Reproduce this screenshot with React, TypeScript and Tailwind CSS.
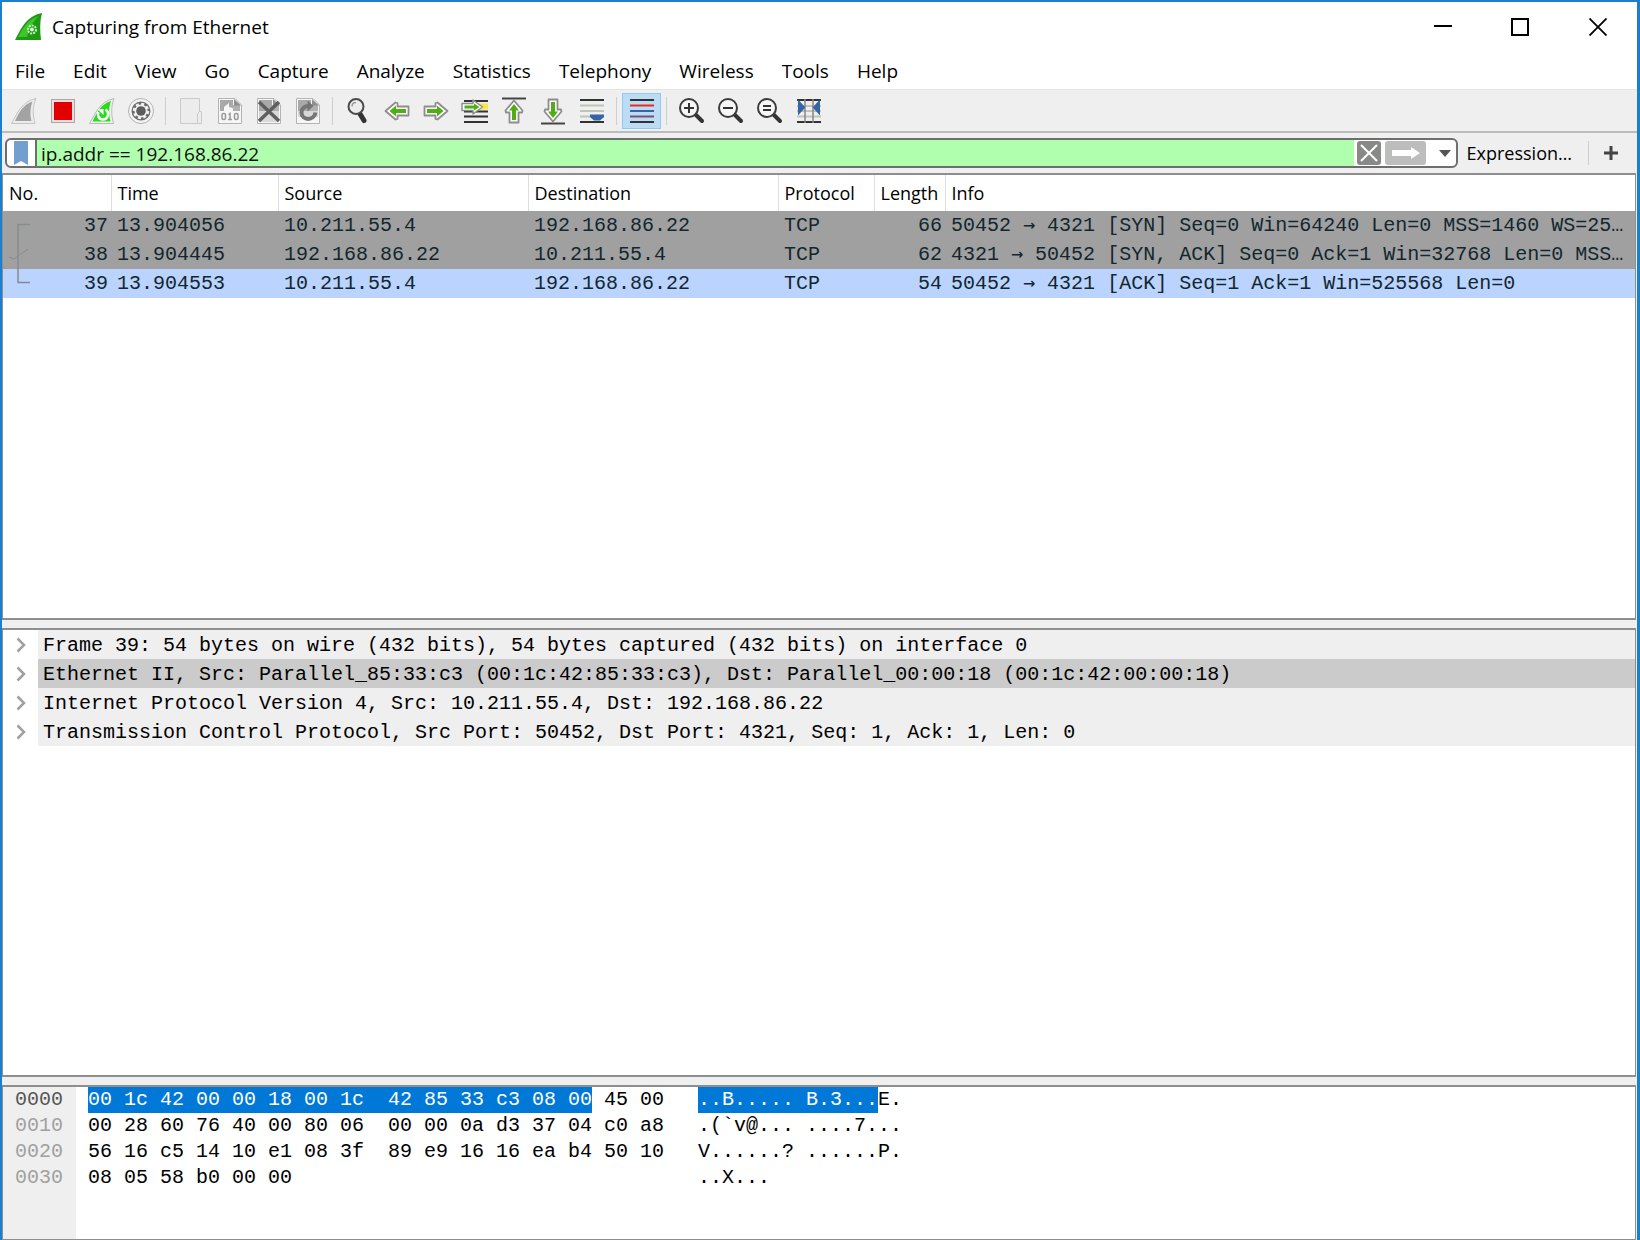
import type { ReactNode } from 'react'

const menus = ['File', 'Edit', 'View', 'Go', 'Capture', 'Analyze', 'Statistics', 'Telephony', 'Wireless', 'Tools', 'Help']

const packets = [
  { no: 37, time: '13.904056', src: '10.211.55.4', dst: '192.168.86.22', proto: 'TCP', len: 66, from: '50452', to: '4321', info: '[SYN] Seq=0 Win=64240 Len=0 MSS=1460 WS=25…', row: 'bg-[#a0a0a0]' },
  { no: 38, time: '13.904445', src: '192.168.86.22', dst: '10.211.55.4', proto: 'TCP', len: 62, from: '4321', to: '50452', info: '[SYN, ACK] Seq=0 Ack=1 Win=32768 Len=0 MSS…', row: 'bg-[#a0a0a0]' },
  { no: 39, time: '13.904553', src: '10.211.55.4', dst: '192.168.86.22', proto: 'TCP', len: 54, from: '50452', to: '4321', info: '[ACK] Seq=1 Ack=1 Win=525568 Len=0', row: 'bg-[#bad3ff]' },
]

const columns = [
  { label: 'No.', width: 'w-[108px]' },
  { label: 'Time', width: 'w-[167px]' },
  { label: 'Source', width: 'w-[250px]' },
  { label: 'Destination', width: 'w-[250px]' },
  { label: 'Protocol', width: 'w-[96px]' },
  { label: 'Length', width: 'w-[71px]' },
  { label: 'Info', width: '' },
]

const details = [
  'Frame 39: 54 bytes on wire (432 bits), 54 bytes captured (432 bits) on interface 0',
  'Ethernet II, Src: Parallel_85:33:c3 (00:1c:42:85:33:c3), Dst: Parallel_00:00:18 (00:1c:42:00:00:18)',
  'Internet Protocol Version 4, Src: 10.211.55.4, Dst: 192.168.86.22',
  'Transmission Control Protocol, Src Port: 50452, Dst Port: 4321, Seq: 1, Ack: 1, Len: 0',
]

const dump = [
  { offset: '0000', hexSel: '00 1c 42 00 00 18 00 1c  42 85 33 c3 08 00', hex: ' 45 00', asciiSel: '..B..... B.3...', ascii: 'E.' },
  { offset: '0010', hexSel: '', hex: '00 28 60 76 40 00 80 06  00 00 0a d3 37 04 c0 a8', asciiSel: '', ascii: '.(`v@... ....7...' },
  { offset: '0020', hexSel: '', hex: '56 16 c5 14 10 e1 08 3f  89 e9 16 16 ea b4 50 10', asciiSel: '', ascii: 'V......? ......P.' },
  { offset: '0030', hexSel: '', hex: '08 05 58 b0 00 00', asciiSel: '', ascii: '..X...' },
]

function Icon({ children }: { children: ReactNode }) {
  return (
    <svg viewBox="0 0 28 28" className="size-7" fill="none" aria-hidden="true">
      {children}
    </svg>
  )
}

function Tool({ label, active, children }: { label: string; active?: boolean; children: ReactNode }) {
  return (
    <button
      type="button"
      aria-label={label}
      className={
        active
          ? 'flex h-9 w-[39px] items-center justify-center border border-[#90c8f6] bg-[#bcdcf4]'
          : 'flex h-9 w-[39px] items-center justify-center border border-transparent'
      }
    >
      <Icon>{children}</Icon>
    </button>
  )
}

function Sep() {
  return <div className="mx-[5px] h-7 w-px bg-[#cfcfcf]" />
}

// Page with a folded corner, shared by the save, close and reload icons
function Page() {
  return (
    <>
      <path d="M2.500 1.500H19L25.500 8V26.500H2.500Z" fill="#f6f6f6" stroke="#b4b4b4" />
      <path d="M4 3H17V14H4Z" fill="#a8a8a8" />
      <path d="M17 8H24V14H17Z" fill="#b0b0b0" />
      <path d="M18 2V8.500H25Z" fill="#8f8f8f" />
    </>
  )
}

function Lens({ sign }: { sign: string }) {
  return (
    <>
      <path d="M17 17L24 24" stroke="#333" strokeWidth="4" strokeLinecap="round" />
      <circle cx="11" cy="11" r="9" fill="#f6f6f6" stroke="#3c3c3c" strokeWidth="2" />
      <path d={sign} stroke="#333" strokeWidth="2" />
    </>
  )
}

function Arrow() {
  return (
    <>
      <path d="M2.500 9.500H13.500V6L15.500 5.500L25.500 14L15.500 22.500L13.500 22V18.500H2.500Z" fill="#fff" stroke="#8d8d8d" strokeWidth="1.800" strokeLinejoin="round" />
      <path d="M5 12H15V8.500L21.500 14L15 19.500V16H5Z" fill="#4fae14" />
    </>
  )
}

function Toolbar() {
  return (
    <div role="toolbar" aria-label="Main toolbar" className="flex h-[43px] items-center border-b-2 border-[#bcbcbc] bg-[#efefef] pl-[2px]">
      <Tool label="Start capture">
        <path d="M1.500 26.500C7 17 12 4 26 1.500C22.500 9 22.500 18 25 26.500Z" fill="#ececec" stroke="#c4c4c4" />
        <path d="M5 24C9 15 14 7 22.500 4.500C20 11 20 18 21.500 24Z" fill="#a3a3a3" />
      </Tool>
      <Tool label="Stop capture">
        <rect x="2.500" y="2.500" width="23" height="23" fill="#f0dede" stroke="#a8a8a8" />
        <rect x="5" y="5" width="18" height="18" fill="#e00000" />
      </Tool>
      <Tool label="Restart capture">
        <path d="M1.500 26.500C7 17 12 4 26 1.500C23 9 23 18 25.500 26.500Z" fill="#f3f3f3" stroke="#b9b9b9" />
        <path d="M4.500 24.500C9 15 13 7 23 4C20.500 11 21 18 22.500 24.500Z" fill="#27dc1c" />
        <path d="M17.500 12.500C22 15.500 20 22.500 15 22.500C10.500 22.500 9 18 10.500 15" stroke="#fff" strokeWidth="2.500" />
        <path d="M10 12.500L15.500 12V18Z" fill="#fff" />
      </Tool>
      <Tool label="Capture options">
        <circle cx="14" cy="14" r="12.500" fill="#f3f3f3" stroke="#b3b3b3" />
        <circle cx="14" cy="14" r="8" stroke="#6b6b6b" strokeWidth="3" />
        <circle cx="14" cy="14" r="7" stroke="#f3f3f3" strokeWidth="2.500" strokeDasharray="3 2.500" />
        <circle cx="14" cy="14" r="4.800" fill="#5e5e5e" />
      </Tool>
      <Sep />
      <Tool label="Open">
        <path d="M3.500 1.500H22.500V14.500H24.500V26.500H3.500Z" fill="#ececec" stroke="#cacaca" />
        <path d="M20.500 26V16.500L22.500 14.500" stroke="#cacaca" />
      </Tool>
      <Tool label="Save">
        <Page />
        <path d="M8 14V10L13 6V10L17 11V14Z" fill="#f6f6f6" />
        <rect x="6" y="16.500" width="3.500" height="6" rx="1.500" stroke="#999" strokeWidth="1.500" />
        <path d="M12.500 17.500L14 16.500V22.500M12 22.500H16" stroke="#999" strokeWidth="1.500" />
        <rect x="18.500" y="16.500" width="3.500" height="6" rx="1.500" stroke="#999" strokeWidth="1.500" />
      </Tool>
      <Tool label="Close">
        <Page />
        <path d="M4 14H24V25H4Z" fill="#d8d8d8" />
        <path d="M4 5L24 24M24 5L4 24" stroke="#5f5f5f" strokeWidth="3.500" />
      </Tool>
      <Tool label="Reload">
        <Page />
        <path d="M4 14H24V20H4Z" fill="#d8d8d8" />
        <path d="M21.500 15.500C20.500 24 7.500 24 7.500 15.500C7.500 11.500 10.500 9 15 9" stroke="#757575" strokeWidth="4" />
        <path d="M13.500 3.500L19.500 9L13.500 14.500Z" fill="#757575" />
      </Tool>
      <Sep />
      <Tool label="Find">
        <path d="M15.500 16L20 23.500" stroke="#333" strokeWidth="5" strokeLinecap="round" />
        <circle cx="12" cy="9.500" r="7.500" fill="#ededed" stroke="#4a4a4a" strokeWidth="2" />
        <path d="M8 9.500C8 7 9.500 5.500 12 5.500" stroke="#999" strokeWidth="1.500" />
      </Tool>
      <Tool label="Go back">
        <g transform="rotate(180 14 14)">
          <Arrow />
        </g>
      </Tool>
      <Tool label="Go forward">
        <Arrow />
      </Tool>
      <Tool label="Go to packet">
        <path d="M3 4H27M3 19.500H27M3 25H27" stroke="#333" strokeWidth="2" />
        <path d="M16 9.500H27" stroke="#f4e84a" strokeWidth="6" />
        <path d="M3 14.500H27" stroke="#333" strokeWidth="2" />
        <path d="M1 6.500H12V3L21.500 10L12 17V13.500H1Z" fill="#fff" stroke="#8d8d8d" strokeWidth="1.500" strokeLinejoin="round" />
        <path d="M3.500 8.500H13V6.500L18.500 10L13 13.500V11.500H3.500Z" fill="#4fae14" />
      </Tool>
      <Tool label="First packet">
        <path d="M2 1.500H26" stroke="#444" strokeWidth="2" />
        <path d="M9.500 25.500V15.500H6L5.500 13.500L14 3.500L22.500 13.500L22 15.500H18.500V25.500Z" fill="#fff" stroke="#8d8d8d" strokeWidth="1.800" strokeLinejoin="round" />
        <path d="M12 23V13.500H9L14 7L19 13.500H16V23Z" fill="#4fae14" />
      </Tool>
      <Tool label="Last packet">
        <path d="M2 26.500H26" stroke="#444" strokeWidth="2" />
        <path d="M9.500 2.500V12.500H6L5.500 14.500L14 24.500L22.500 14.500L22 12.500H18.500V2.500Z" fill="#fff" stroke="#8d8d8d" strokeWidth="1.800" strokeLinejoin="round" />
        <path d="M12 5V14.500H9L14 21L19 14.500H16V5Z" fill="#4fae14" />
      </Tool>
      <Tool label="Auto scroll">
        <path d="M2 3H26M2 25H26" stroke="#333" strokeWidth="2" />
        <path d="M2 8.500H26M2 14H26M2 19.500H26" stroke="#bfc4ba" strokeWidth="2" />
        <path d="M12 17.500H26V20L22 23.500H16L12 20Z" fill="#3465a4" />
      </Tool>
      <Sep />
      <Tool label="Colorize packets" active>
        <path d="M2 3H26M2 25H26" stroke="#333" strokeWidth="2" />
        <path d="M2 8.500H26" stroke="#ef2929" strokeWidth="2" />
        <path d="M2 14H26" stroke="#3465a4" strokeWidth="2" />
        <path d="M2 19.500H26" stroke="#75507b" strokeWidth="2" />
      </Tool>
      <Sep />
      <Tool label="Zoom in">
        <Lens sign="M6 11H16M11 6V16" />
      </Tool>
      <Tool label="Zoom out">
        <Lens sign="M6 11H16" />
      </Tool>
      <Tool label="Normal size">
        <Lens sign="M7 9H15M7 13H15" />
      </Tool>
      <Tool label="Resize columns">
        <path d="M2 3H26M2 25H26" stroke="#333" strokeWidth="2" />
        <path d="M2 9H26M2 14H26M2 19.500H26" stroke="#c0c4bb" strokeWidth="2" />
        <path d="M10 2V26M18 2V26" stroke="#888" strokeWidth="1.500" />
        <path d="M4 5L9 10.500L4 16ZM24 5L19 10.500L24 16Z" fill="#3465a4" stroke="#3465a4" strokeWidth="2" />
      </Tool>
    </div>
  )
}

function FilterBar() {
  return (
    <div className="flex h-[40px] items-center bg-[#efefef] pr-[19px] pl-[3px]">
      <div className="flex h-[30px] flex-1 items-stretch overflow-hidden rounded-md border-2 border-[#6e6e6e] bg-white">
        <button type="button" aria-label="Filter bookmarks" className="flex w-[30px] items-center justify-center border-r-2 border-[#6e6e6e]">
          <svg viewBox="0 0 14 24" className="h-6 w-[14px]" aria-hidden="true">
            <path d="M0 0H14V24L7 20L0 24Z" fill="#729fcf" />
          </svg>
        </button>
        <input
          aria-label="Display filter"
          defaultValue="ip.addr == 192.168.86.22"
          className="min-w-0 flex-1 bg-[#afffaf] pt-[2px] pl-1 text-[19px] text-[#101010] outline-none"
        />
        <button type="button" aria-label="Clear filter" className="mx-[3px] flex w-6 items-center justify-center">
          <svg viewBox="0 0 24 24" className="size-6" aria-hidden="true">
            <rect width="24" height="24" rx="3" fill="#888a85" />
            <path d="M4 4L20 20M20 4L4 20" stroke="#fff" strokeWidth="2" />
          </svg>
        </button>
        <button type="button" aria-label="Apply filter" className="mr-[7px] flex w-[43px] items-center justify-center">
          <svg viewBox="0 0 41 24" className="h-6 w-[41px]" aria-hidden="true">
            <rect width="41" height="24" rx="3" fill="#bdbdbd" />
            <path d="M7 9H26V6L35 12L26 18V15H7Z" fill="#fff" />
          </svg>
        </button>
        <button type="button" aria-label="Recent filters" className="flex w-[22px] items-center justify-center">
          <svg viewBox="0 0 12 7" className="h-[7px] w-3" aria-hidden="true">
            <path d="M0 0H12L6 7Z" fill="#555" />
          </svg>
        </button>
      </div>
      <button type="button" className="ml-[9px] text-[18px]">Expression…</button>
      <div className="ml-[16px] h-6 w-px bg-[#cfcfcf]" />
      <button type="button" aria-label="Add filter button" className="ml-[15px]">
        <svg viewBox="0 0 14 14" className="size-[14px]" aria-hidden="true">
          <path d="M7 0V14M0 7H14" stroke="#444" strokeWidth="3" />
        </svg>
      </button>
    </div>
  )
}

function PacketList() {
  return (
    <div className="relative h-[447px] border-x border-y-2 border-[#8e8e8e] bg-white">
      <table className="w-full table-fixed border-collapse text-left">
        <colgroup>
          {columns.map((c) => (
            <col key={c.label} className={c.width} />
          ))}
        </colgroup>
        <thead>
          <tr className="h-9 text-[18px]">
            {columns.map((c) => (
              <th key={c.label} scope="col" className="border-r border-[#dedede] p-0 pl-[6px] font-normal last:border-r-0">
                {c.label}
              </th>
            ))}
          </tr>
        </thead>
        <tbody className="font-['Liberation_Mono',monospace] text-[20px] leading-[29px] text-[#12272e]">
          {packets.map((p) => (
            <tr key={p.no} className={p.row}>
              <td className="p-0 pr-[3px] text-right">{p.no}</td>
              <td className="p-0 pl-[6px]">{p.time}</td>
              <td className="p-0 pl-[6px]">{p.src}</td>
              <td className="p-0 pl-[6px]">{p.dst}</td>
              <td className="p-0 pl-[6px]">{p.proto}</td>
              <td className="p-0 pr-[3px] text-right">{p.len}</td>
              <td className="p-0 pl-[6px] whitespace-nowrap">
                {p.from} <span className="font-['DejaVu_Sans_Mono',monospace] leading-none">→</span> {p.to} {p.info}
              </td>
            </tr>
          ))}
        </tbody>
      </table>
      {/* conversation bracket over the No. column */}
      <svg viewBox="0 0 24 62" className="absolute top-[48px] left-[5px] h-[62px] w-6" fill="none" aria-hidden="true">
        <path d="M22 1.500H10V59.500H22" stroke="#858a90" strokeWidth="1.500" />
        <path d="M1 34L6 36L20 26" stroke="#8c8c8c" strokeWidth="1" />
      </svg>
    </div>
  )
}

function PacketDetails() {
  return (
    <ul className="h-[449px] border-x border-y-2 border-[#8e8e8e] bg-white font-['Liberation_Mono',monospace] text-[20px] leading-[27px]">
      {details.map((d, i) => (
        <li key={d} className="flex">
          <button type="button" aria-label="Expand" className="flex w-[35px] items-center justify-center">
            <svg viewBox="0 0 10 16" className="h-4 w-[10px]" fill="none" aria-hidden="true">
              <path d="M1.500 1.500L8 8L1.500 14.500" stroke="#a0a0a0" strokeWidth="2.500" />
            </svg>
          </button>
          <span className={i === 1 ? 'flex-1 bg-[#cbcbcb] pt-[2px] pl-[5px]' : 'flex-1 bg-[#efefef] pt-[2px] pl-[5px]'}>{d}</span>
        </li>
      ))}
    </ul>
  )
}

function PacketBytes() {
  return (
    <div className="flex flex-1 flex-col border border-t-2 border-[#8e8e8e] bg-white font-['Liberation_Mono',monospace] text-[20px] leading-[26px]">
      {dump.map((line, i) => (
        <div key={line.offset} className="flex whitespace-pre">
          <span className={i === 0 ? 'w-[73px] bg-[#efefef] pl-[12px] text-[#555]' : 'w-[73px] bg-[#efefef] pl-[12px] text-[#a0a0a0]'}>
            {line.offset}
          </span>
          <span className="ml-[12px] w-[610px]">
            <span className="inline-block bg-[#0078d7] text-white">{line.hexSel}</span>
            {line.hex}
          </span>
          <span>
            <span className="inline-block bg-[#0078d7] text-white">{line.asciiSel}</span>
            {line.ascii}
          </span>
        </div>
      ))}
      <div className="w-[73px] flex-1 bg-[#efefef]" />
    </div>
  )
}

export default function App() {
  return (
    <div className="flex min-h-screen flex-col border-t-2 border-r-3 border-l-2 border-[#1b7fd0] bg-[#efefef] font-['Open_Sans','Noto_Sans',sans-serif] text-black">
      <header className="flex h-[50px] items-center bg-white pl-[13px]">
        <svg viewBox="0 0 28 28" className="size-7" aria-hidden="true">
          <path d="M0 27C6 16 11 3 27 0C24.500 9 25 18 26 27Z" fill="#1d9a12" />
          <path d="M3 24C8 15 13 6 24 3C20 6 15 13 12 24Z" fill="#3fc52c" />
          <circle cx="17" cy="16.500" r="4" fill="none" stroke="#c9efc4" strokeWidth="2" strokeDasharray="2 1" />
          <circle cx="17" cy="16.500" r="2" fill="#d9f5d5" />
        </svg>
        <h1 className="ml-[9px] flex-1 text-[19px]">Capturing from Ethernet</h1>
        <button type="button" aria-label="Minimize" className="flex h-full w-[78px] items-center justify-center">
          <svg viewBox="0 0 18 18" className="size-[18px]" aria-hidden="true">
            <path d="M0 8H18" stroke="#000" strokeWidth="2" />
          </svg>
        </button>
        <button type="button" aria-label="Maximize" className="flex h-full w-[76px] items-center justify-center">
          <svg viewBox="0 0 18 18" className="size-[18px]" fill="none" aria-hidden="true">
            <rect x="1" y="1" width="16" height="16" stroke="#000" strokeWidth="2" />
          </svg>
        </button>
        <button type="button" aria-label="Close" className="flex h-full w-[79px] items-center justify-center">
          <svg viewBox="0 0 18 18" className="size-[18px]" aria-hidden="true">
            <path d="M0.500 0.500L17.500 17.500M17.500 0.500L0.500 17.500" stroke="#000" strokeWidth="1.800" />
          </svg>
        </button>
      </header>
      <nav aria-label="Menu bar" className="flex h-[38px] items-center gap-7 border-b border-[#e4e4e4] bg-white pt-[2px] pl-[13px] text-[19px]">
        {menus.map((m) => (
          <button key={m} type="button">{m}</button>
        ))}
      </nav>
      <Toolbar />
      <FilterBar />
      <main className="flex flex-1 flex-col gap-2 pr-px">
        <PacketList />
        <PacketDetails />
        <PacketBytes />
      </main>
    </div>
  )
}
